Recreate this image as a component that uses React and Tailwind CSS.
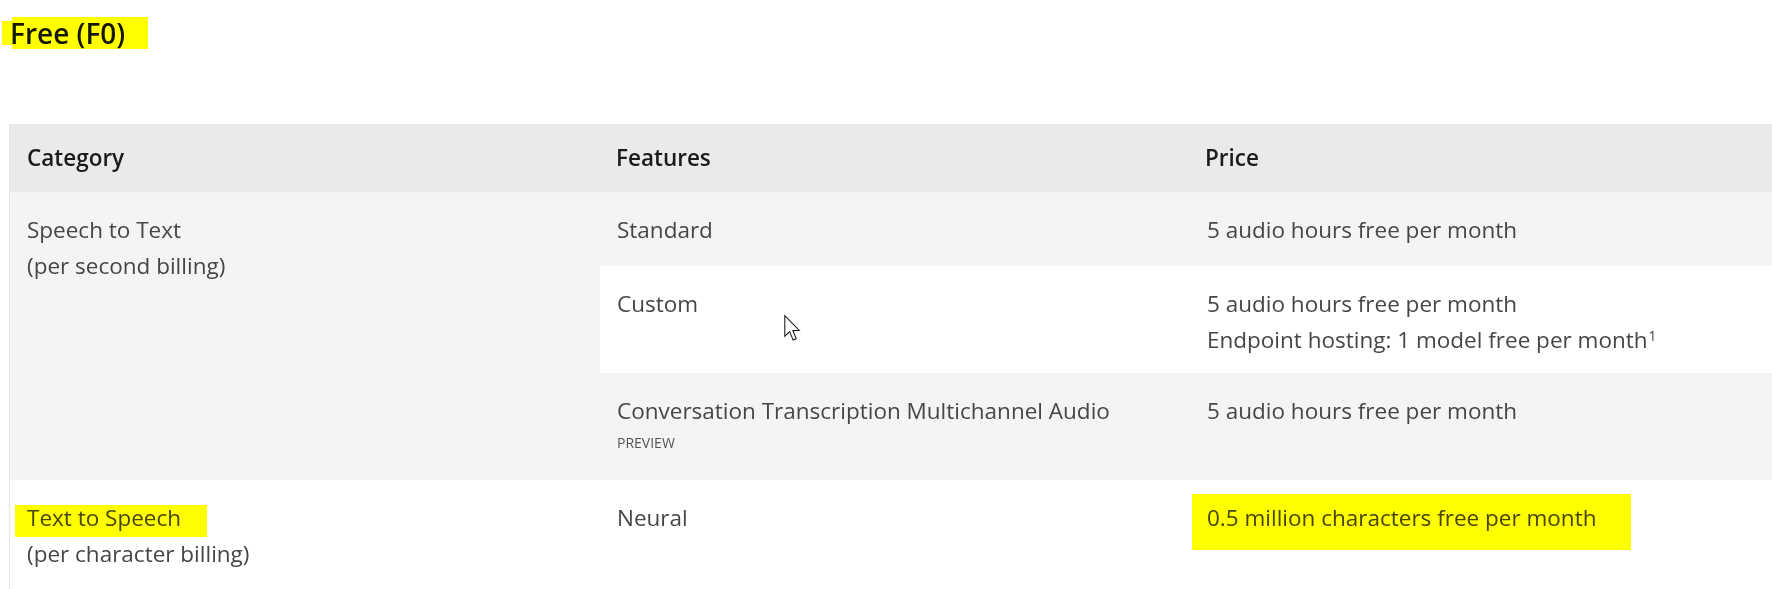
import React from "react";

function Cursor() {
  return (
    <svg
      className="absolute left-[784px] top-[315px]"
      width="17"
      height="27"
      viewBox="0 0 13 21"
    >
      <path
        d="M0.5 0.5 L0.5 16.5 L4.3 12.9 L7 19.5 L9.4 18.5 L6.8 12 L11.8 12 Z"
        fill="#ffffff"
        stroke="#111111"
        strokeWidth="0.8"
        strokeLinejoin="miter"
      />
    </svg>
  );
}

function Marker({ className }) {
  // highlighter annotation painted over the screenshot
  return (
    <div
      className={`absolute bg-[#ffff00] mix-blend-multiply pointer-events-none ${className}`}
    ></div>
  );
}

export default function App() {
  const cell = "px-[17px] pt-[20px] leading-[36px]";
  return (
    <div
      className="relative w-[1772px] h-[589px] overflow-hidden bg-white text-[22.5px] text-[#464646]"
      style={{ fontFamily: "'Open Sans', 'Noto Sans', sans-serif" }}
    >
      <h2 className="pl-[10px] pt-[14px] h-[124px] text-[28px] leading-[38px] font-semibold text-[#161616]">
        Free (F0)
      </h2>

      <div className="ml-[9px] grid grid-cols-[590px_590px_590px] grid-rows-[68px_74px_107px_107px_auto] border-l border-[#e4e4e4]">
        <div className="px-[17px] py-[16px] leading-[36px] font-semibold text-[#1b1b1b] bg-[#e9eaec]">
          Category
        </div>
        <div className="px-[16px] py-[16px] leading-[36px] font-semibold text-[#1b1b1b] bg-[#e9eaec]">
          Features
        </div>
        <div className="px-[15px] py-[16px] leading-[36px] font-semibold text-[#1b1b1b] bg-[#e9eaec]">
          Price
        </div>

        <div className={`${cell} row-span-3 bg-[#f3f4f6]`}>
          <div>Speech to Text</div>
          <div>(per second billing)</div>
        </div>
        <div className={`${cell} bg-[#f3f4f6]`}>Standard</div>
        <div className={`${cell} bg-[#f3f4f6]`}>5 audio hours free per month</div>

        <div className={`${cell} bg-white`}>Custom</div>
        <div className={`${cell} bg-white`}>
          <div>5 audio hours free per month</div>
          <div>
            Endpoint hosting: 1 model free per month
            <sup className="text-[14px] ml-[1px]">1</sup>
          </div>
        </div>

        <div className={`${cell} bg-[#f3f4f6]`}>
          <div>Conversation Transcription Multichannel Audio</div>
          <div className="text-[14px] leading-[28px] text-[#555555]">PREVIEW</div>
        </div>
        <div className={`${cell} bg-[#f3f4f6]`}>5 audio hours free per month</div>

        <div className={`${cell} h-[120px] bg-white`}>
          <div>Text to Speech</div>
          <div>(per character billing)</div>
        </div>
        <div className={`${cell} bg-white`}>Neural</div>
        <div className={`${cell} bg-white`}>0.5 million characters free per month</div>
      </div>

      <Marker className="left-[12px] top-[17px] w-[136px] h-[32px]" />
      <Marker className="left-[2px] top-[21px] w-[10px] h-[24px]" />
      <Marker className="left-[15px] top-[505px] w-[192px] h-[32px]" />
      <Marker className="left-[1192px] top-[494px] w-[439px] h-[56px]" />
      <Cursor />
    </div>
  );
}
